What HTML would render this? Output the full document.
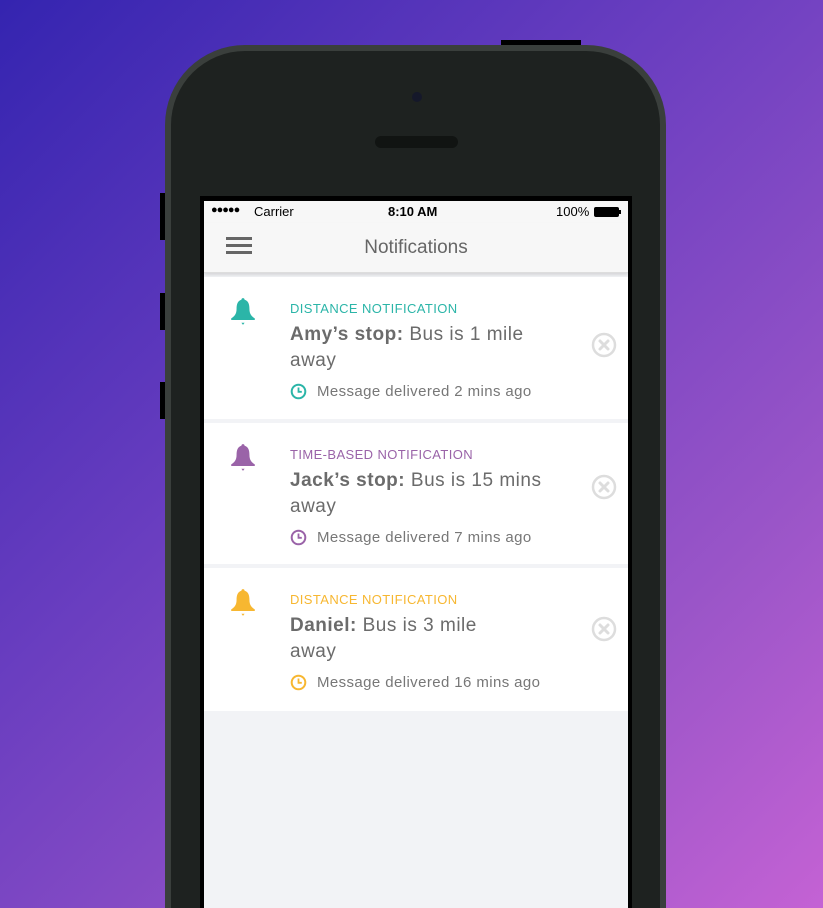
<!DOCTYPE html>
<html><head><meta charset="utf-8"><style>
*{margin:0;padding:0;box-sizing:border-box}
html,body{width:823px;height:908px;overflow:hidden}
body{position:relative;font-family:"Liberation Sans",sans-serif;
background:linear-gradient(135deg,#3424b0 0%,#6a3ec0 40%,#9a55c8 75%,#c462d4 100%)}
.abs{position:absolute}
.phone{left:165px;top:45px;width:501px;height:863px;border-radius:80px 80px 0 0;background:#3a3f3c}
.phoneIn{left:171px;top:51px;width:489px;height:857px;border-radius:74px 74px 0 0;background:#1e2220}
.btn{background:#000}
.screen{left:200px;top:196px;width:432px;height:712px;background:#000}
.s{left:204px;top:201px;width:424px;height:707px;background:#f2f3f6;overflow:hidden}
.status{height:22px;background:#f7f7f7;font-size:13px;color:#000;position:relative}
.nav{height:50px;background:#f7f7f7;border-bottom:1px solid #ddd;box-shadow:0 2px 3px rgba(0,0,0,.12);position:relative}
.card{background:#fff;height:141px;position:relative;margin-bottom:4px}
.lbl{position:absolute;left:86px;top:24px;font-size:13px;letter-spacing:.4px}
.ttl{position:absolute;left:86px;top:45px;font-size:19px;line-height:26px;color:#6b6b6b;width:300px;letter-spacing:.5px}
.ttl b{color:#6b6b6b}
.tm{position:absolute;left:113px;top:106px;font-size:15px;color:#777;letter-spacing:.4px}
</style></head><body>
<div class="abs btn" style="left:501px;top:40px;width:80px;height:8px"></div>
<div class="abs btn" style="left:160px;top:193px;width:8px;height:47px"></div>
<div class="abs btn" style="left:160px;top:293px;width:8px;height:37px"></div>
<div class="abs btn" style="left:160px;top:382px;width:8px;height:37px"></div>
<div class="abs phone"></div>
<div class="abs phoneIn"></div>
<div class="abs" style="left:412px;top:92px;width:10px;height:10px;border-radius:50%;background:#15182a"></div>
<div class="abs" style="left:375px;top:136px;width:83px;height:12px;border-radius:6px;background:#111412"></div>
<div class="abs screen"></div>
<div class="abs s">
 <div class="status">
  <span class="abs" style="left:7px;top:3px;letter-spacing:-1px;font-size:11px">●●●●●</span>
  <span class="abs" style="left:50px;top:3px">Carrier</span>
  <span class="abs" style="left:184px;top:3px;font-weight:bold">8:10 AM</span>
  <span class="abs" style="left:352px;top:3px">100%</span>
  <span class="abs" style="left:390px;top:6px;width:25px;height:10px;background:#000;border-radius:2px"></span>
  <span class="abs" style="left:415px;top:9px;width:2px;height:4px;background:#000"></span>
 </div>
 <div class="nav">
  <div class="abs" style="left:22px;top:14px;width:26px;height:3px;background:#666;box-shadow:0 7px 0 #666,0 14px 0 #666"></div>
  <div class="abs" style="left:0;width:424px;top:14px;text-align:center;font-size:19px;color:#666">Notifications</div>
 </div>
 <div style="height:4px"></div>
 <div class="card" style="height:142px">
  <svg class="abs" style="left:25px;top:20px" width="28" height="30" viewBox="0 0 26 28"><path d="M13 1c1 0 1.5.8 1.5 1.6C18 3.5 19 7 19 11c0 5 2 7 5 9v1.5H2V20c3-2 5-4 5-9 0-4 1-7.5 4.5-8.4C11.5 1.8 12 1 13 1z" fill="#2bb5a8"/><path d="M11.5 24h3l-1.5 2z" fill="#2bb5a8"/></svg>
  <div class="lbl" style="color:#2bb5a8">DISTANCE NOTIFICATION</div>
  <div class="ttl"><b>Amy’s stop:</b> Bus is 1 mile<br>away</div>
  <svg class="abs" style="left:86px;top:106px" width="17" height="17" viewBox="0 0 17 17"><circle cx="8.5" cy="8.5" r="6.8" fill="none" stroke="#2bb5a8" stroke-width="2"/><path d="M8.5 4.5v4.3h3.3" fill="none" stroke="#2bb5a8" stroke-width="1.8"/></svg>
  <div class="tm">Message delivered 2 mins ago</div>
  <svg class="abs" style="left:387px;top:55px" width="26" height="26" viewBox="0 0 26 26"><circle cx="13" cy="13" r="11" fill="none" stroke="#ddd" stroke-width="2.5"/><path d="M9 9l8 8M17 9l-8 8" stroke="#ddd" stroke-width="3" stroke-linecap="round"/></svg>
 </div>
 <div class="card">
  <svg class="abs" style="left:25px;top:20px" width="28" height="30" viewBox="0 0 26 28"><path d="M13 1c1 0 1.5.8 1.5 1.6C18 3.5 19 7 19 11c0 5 2 7 5 9v1.5H2V20c3-2 5-4 5-9 0-4 1-7.5 4.5-8.4C11.5 1.8 12 1 13 1z" fill="#9a63a8"/><path d="M11.5 24h3l-1.5 2z" fill="#9a63a8"/></svg>
  <div class="lbl" style="color:#9a63a8">TIME-BASED NOTIFICATION</div>
  <div class="ttl"><b>Jack’s stop:</b> Bus is 15 mins<br>away</div>
  <svg class="abs" style="left:86px;top:106px" width="17" height="17" viewBox="0 0 17 17"><circle cx="8.5" cy="8.5" r="6.8" fill="none" stroke="#9a63a8" stroke-width="2"/><path d="M8.5 4.5v4.3h3.3" fill="none" stroke="#9a63a8" stroke-width="1.8"/></svg>
  <div class="tm">Message delivered 7 mins ago</div>
  <svg class="abs" style="left:387px;top:51px" width="26" height="26" viewBox="0 0 26 26"><circle cx="13" cy="13" r="11" fill="none" stroke="#ddd" stroke-width="2.5"/><path d="M9 9l8 8M17 9l-8 8" stroke="#ddd" stroke-width="3" stroke-linecap="round"/></svg>
 </div>
 <div class="card" style="height:143px">
  <svg class="abs" style="left:25px;top:20px" width="28" height="30" viewBox="0 0 26 28"><path d="M13 1c1 0 1.5.8 1.5 1.6C18 3.5 19 7 19 11c0 5 2 7 5 9v1.5H2V20c3-2 5-4 5-9 0-4 1-7.5 4.5-8.4C11.5 1.8 12 1 13 1z" fill="#f7b731"/><path d="M11.5 24h3l-1.5 2z" fill="#f7b731"/></svg>
  <div class="lbl" style="color:#f7b731">DISTANCE NOTIFICATION</div>
  <div class="ttl"><b>Daniel:</b> Bus is 3 mile<br>away</div>
  <svg class="abs" style="left:86px;top:106px" width="17" height="17" viewBox="0 0 17 17"><circle cx="8.5" cy="8.5" r="6.8" fill="none" stroke="#f7b731" stroke-width="2"/><path d="M8.5 4.5v4.3h3.3" fill="none" stroke="#f7b731" stroke-width="1.8"/></svg>
  <div class="tm">Message delivered 16 mins ago</div>
  <svg class="abs" style="left:387px;top:48px" width="26" height="26" viewBox="0 0 26 26"><circle cx="13" cy="13" r="11" fill="none" stroke="#ddd" stroke-width="2.5"/><path d="M9 9l8 8M17 9l-8 8" stroke="#ddd" stroke-width="3" stroke-linecap="round"/></svg>
 </div>
</div>
</body></html>
